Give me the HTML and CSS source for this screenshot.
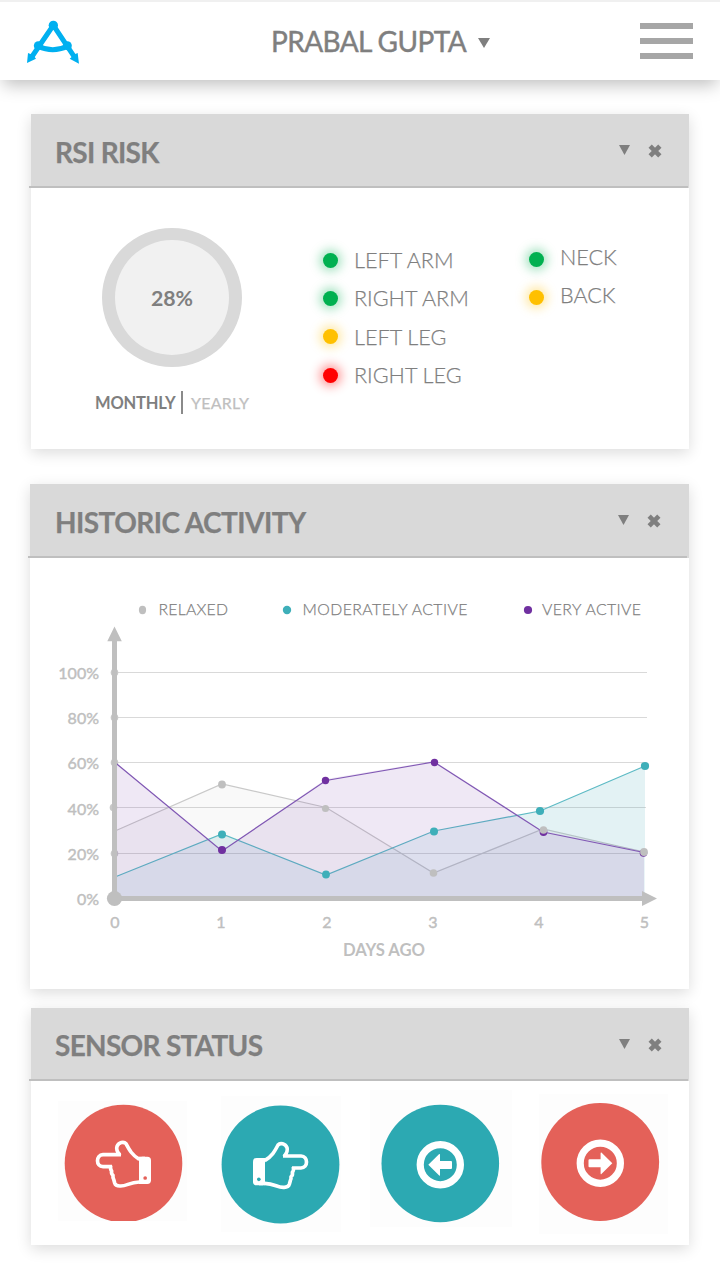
FILE: index.html
```html
<!DOCTYPE html>
<html lang="en">
<head>
<meta charset="utf-8">
<title>RSI Dashboard</title>
<link rel="stylesheet" href="styles.css">
</head>
<body>
<header class="topbar">
  <svg class="logo" viewBox="75 57 168 140">
    <g fill="none" stroke="#00b0f0" stroke-width="15">
      <path d="M93 174 160 76 225 174M115 139Q158 160 202 139"/>
    </g>
    <g fill="#00b0f0">
      <circle cx="160" cy="76" r="14"/><circle cx="115" cy="137" r="13.500"/><circle cx="202" cy="137" r="13.500"/>
      <path d="M81 189 84 159 93 163 104 171 108 176ZM237 191 209 176 215 171 226 162 233 159Z"/>
    </g>
  </svg>
  <div class="user"><span class="user-name">PRABAL GUPTA</span><svg class="user-caret" viewBox="0 0 12 10"><path d="M0 0H12L6 10Z"/></svg></div>
  <div class="menu"><i></i><i></i><i></i></div>
</header>

<main>
  <section class="card risk">
    <div class="card-head">
      <h2 class="t-risk">RSI RISK</h2>
      <svg class="caret" viewBox="0 0 11 10"><path d="M0 0H11L5.500 10Z"/></svg>
      <svg class="close" viewBox="0 0 13 13"><path d="M2 2 11 11M11 2 2 11"/></svg>
    </div>
    <div class="risk-body">
      <div class="gauge">
        <div class="ring">28%</div>
        <div class="period"><b>MONTHLY</b><i></i><span>YEARLY</span></div>
      </div>
      <ul class="parts">
        <li class="green"><span>LEFT ARM</span></li>
        <li class="green"><span>RIGHT ARM</span></li>
        <li class="amber"><span>LEFT LEG</span></li>
        <li class="red"><span>RIGHT LEG</span></li>
      </ul>
      <ul class="parts second">
        <li class="green"><span>NECK</span></li>
        <li class="amber"><span>BACK</span></li>
      </ul>
    </div>
  </section>

  <section class="card history">
    <div class="card-head">
      <h2 class="t-history">HISTORIC ACTIVITY</h2>
      <svg class="caret" viewBox="0 0 11 10"><path d="M0 0H11L5.500 10Z"/></svg>
      <svg class="close" viewBox="0 0 13 13"><path d="M2 2 11 11M11 2 2 11"/></svg>
    </div>
    <svg class="chart" viewBox="30 558 659 431">
      <g class="legend">
        <ellipse cx="142.500" cy="610" rx="3.600" ry="4.200" fill="#bfbfbf"/>
        <circle cx="287" cy="610" r="4.200" fill="#3eafb9"/>
        <circle cx="528" cy="610" r="4.100" fill="#7030a0"/>
        <text x="158.500" y="615" textLength="69.500">RELAXED</text>
        <text x="302.500" y="615" textLength="165">MODERATELY ACTIVE</text>
        <text x="542" y="615" textLength="99">VERY ACTIVE</text>
      </g>
      <path class="grid" d="M115 672.500H647M115 717.500H647M115 762.500H647M115 807.500H646M115 853.500H646"/>
      <g fill="#c8c8c8"><circle cx="114.500" cy="672.500" r="3.800"/><circle cx="114.500" cy="717.500" r="3.800"/><circle cx="114.500" cy="762.500" r="3.800"/><circle cx="113.500" cy="807.500" r="3.800"/><circle cx="114.500" cy="853.500" r="3.800"/></g>
      <path fill="#7f7f7f" fill-opacity=".045" d="M115 831 222 784 326 807.500 433.500 873 543 829 644 852V897H115Z"/>
      <path class="line" stroke="#c9c9c9" d="M115 831 222 784 326 807.500 433.500 873 543 829 644 852"/>
      <path fill="#4caac4" fill-opacity=".115" d="M115 877 222 834 326 875 434 831 540 811 645 766V897H115Z"/>
      <path fill="#3eb98f" fill-opacity=".04" d="M519 815 540 811 645 766V852L543 831ZM206 840 222 834 238 841 222 851Z"/>
      <path class="line" stroke="#5cbac4" d="M115 877 222 834 326 875 434 831 540 811 645 766"/>
      <path fill="#7030a8" fill-opacity=".11" d="M115 762 222 851 326 779 434 761 543 831 644 851V897H115Z"/>
      <path class="line" stroke="#8058b4" d="M115 762.500 222 851 326 780.500 434 762 543 832 644 852.500"/>
      <g fill="#7030a0"><circle cx="222" cy="850" r="4"/><circle cx="325.500" cy="780.500" r="3.700"/><circle cx="434.500" cy="762.500" r="3.700"/><circle cx="543.500" cy="832" r="3.900"/><circle cx="643.500" cy="853" r="3.800"/></g>
      <g fill="#3eafb9"><circle cx="222" cy="834.500" r="4"/><circle cx="326" cy="874.500" r="3.900"/><circle cx="434" cy="831.500" r="4"/><circle cx="540" cy="811" r="4.100"/><circle cx="645" cy="766" r="4.100"/></g>
      <g fill="#bfbfbf"><circle cx="222" cy="784.500" r="3.900"/><circle cx="325.500" cy="808.500" r="3.600"/><circle cx="433.500" cy="873" r="3.800"/><circle cx="543.500" cy="830" r="3.800"/><circle cx="644" cy="852" r="3.900"/>
        <path d="M112 639H117V896H642V891L657 898.500 642 906V901H112ZM107.300 641.300 114.500 626.500 121.800 641.300Z"/>
        <circle cx="114.500" cy="898.500" r="7.600"/>
      </g>
      <g class="ylabels">
        <text x="99" y="679">100%</text><text x="99" y="724">80%</text><text x="99" y="769">60%</text>
        <text x="99" y="815">40%</text><text x="99" y="860">20%</text><text x="99" y="905">0%</text>
      </g>
      <g class="xlabels">
        <text x="115" y="928">0</text><text x="221" y="928">1</text><text x="327" y="928">2</text>
        <text x="433" y="928">3</text><text x="539" y="928">4</text><text x="644.500" y="928">5</text>
      </g>
      <text class="axis-title" x="343" y="956" textLength="82">DAYS AGO</text>
    </svg>
  </section>

  <section class="card sensors">
    <div class="card-head">
      <h2 class="t-sensors">SENSOR STATUS</h2>
      <svg class="caret" viewBox="0 0 11 10"><path d="M0 0H11L5.500 10Z"/></svg>
      <svg class="close" viewBox="0 0 13 13"><path d="M2 2 11 11M11 2 2 11"/></svg>
    </div>
    <div class="sensor-row">
      <svg class="tile tile-a" viewBox="58 1101 129 120">
        <circle cx="123.500" cy="1163.500" r="58.800" fill="#e46159"/>
        <g transform="translate(20 1080) scale(.33333)">
          <path class="hand" d="M303 224H249C227 225 227 260 249 260H276M272 256Q270 268 275 273 273 282 279 286 278 293 281 298L284 309Q287 319 302 318C322 318 327 307 358 306M300 226Q287 210 291 199C296 186 312 184 318 191 328 210 336 225 358 238"/>
          <rect x="357" y="230" width="36" height="82" rx="11" fill="#fff"/><path d="M357 230H375V312H357Z" fill="#fff"/>
          <circle cx="375.500" cy="294" r="5.500" fill="#e46159"/>
        </g>
      </svg>
      <svg class="tile tile-b" viewBox="221 1096 120 136">
        <circle cx="280.500" cy="1164.500" r="58.900" fill="#2ca9b2"/>
        <g transform="translate(384 1081.330) scale(-.33333 .33333)">
          <path class="hand" d="M303 224H249C227 225 227 260 249 260H276M272 256Q270 268 275 273 273 282 279 286 278 293 281 298L284 309Q287 319 302 318C322 318 327 307 358 306M300 226Q287 210 291 199C296 186 312 184 318 191 328 210 336 225 358 238"/>
          <rect x="357" y="230" width="36" height="82" rx="11" fill="#fff"/><path d="M357 230H375V312H357Z" fill="#fff"/>
          <circle cx="375.500" cy="294" r="5.500" fill="#2ca9b2"/>
        </g>
      </svg>
      <svg class="tile tile-c" viewBox="370 1090 142 137">
        <circle cx="440.300" cy="1163.500" r="58.800" fill="#2ca9b2"/>
        <circle cx="440.300" cy="1164.700" r="20.100" fill="none" stroke="#fff" stroke-width="7.200"/>
        <path fill="#fff" d="M428.300 1164.700 439.200 1154Q440 1153.500 440 1155V1161H451Q452 1161 452 1162V1168Q452 1169 451 1169H440V1175Q440 1176.300 439.200 1175.500Z"/>
      </svg>
      <svg class="tile tile-d" viewBox="539 1094 129 140">
        <circle cx="600.200" cy="1162" r="58.900" fill="#e46159"/>
        <circle cx="600.300" cy="1163.200" r="20.100" fill="none" stroke="#fff" stroke-width="7.200"/>
        <path fill="#fff" d="M612.300 1163.200 601.400 1152.500Q600.600 1152 600.600 1153.500V1159.200H589.500Q588.500 1159.200 588.500 1160.200V1166.200Q588.500 1167.200 589.500 1167.200H600.600V1173.300Q600.600 1174.800 601.400 1174Z"/>
      </svg>
    </div>
  </section>
</main>
</body>
</html>
```
FILE: styles.css
```css
* { box-sizing: border-box; }
body {
  margin: 0;
  width: 720px;
  height: 1280px;
  overflow: hidden;
  background: #fff;
  font-family: Lato, sans-serif;
  color: #7f7f7f;
}
svg { display: block; flex: none; }
h2, ul { margin: 0; padding: 0; }

.topbar {
  display: flex;
  align-items: center;
  height: 80px;
  padding: 0 27px 0 25px;
  border-top: 2px solid #f0f0f0;
  background: #fff;
  box-shadow: 0 8px 16px -3px rgba(0, 0, 0, .25);
}
.logo { width: 56px; height: 46.67px; margin-top: 2px; }
.user { display: flex; align-items: center; margin-left: 190px; }
.user-name {
  width: 207px;
  margin-top: -1px;
  font-size: 28px;
  line-height: 34px;
  letter-spacing: -.6px;
  white-space: nowrap;
  -webkit-text-stroke: .45px #7f7f7f;
}
.user-caret { width: 12px; height: 10px; margin-top: 3px; }
.user-caret path, .caret path { fill: #7f7f7f; }
.menu { display: grid; gap: 9px; width: 53px; margin-left: auto; }
.menu i { height: 6px; background: #a6a6a6; }

main { display: flex; flex-direction: column; padding: 34px 31px 0; }
.card {
  display: flex;
  flex-direction: column;
  flex: none;
  background: #fff;
  box-shadow: 0 4px 14px rgba(0, 0, 0, .14);
}
.risk { height: 335px; }
.history { height: 505px; margin: 35px 0 0 -1px; }
.sensors { height: 237px; margin-top: 19px; }
.card-head {
  display: flex;
  align-items: center;
  flex: none;
  height: 74px;
  margin: 0 1px 0 -2px;
  padding: 0 26px;
  border-bottom: 2px solid #bfbfbf;
  background: linear-gradient(#d9d9d9, #d9d9d9) 2px 0 no-repeat;
  box-shadow: 1px 0 #d9d9d9;
}
.history .card-head { margin-right: 2px; padding-left: 27px; box-shadow: 2px 0 #d9d9d9; }
.sensors .card-head { height: 73px; }
h2 {
  margin-top: 3px;
  font-size: 28px;
  line-height: 34px;
  letter-spacing: -.7px;
  white-space: nowrap;
  -webkit-text-stroke: .25px #7f7f7f;
}
.t-history { letter-spacing: -.55px; }
.t-sensors { margin-top: 2px; }
.caret { width: 11px; height: 10px; margin-left: auto; }
.close { width: 14px; height: 14px; margin: 2px 0 0 18px; fill: none; stroke: #7f7f7f; stroke-width: 4.300; }

.risk-body { display: flex; align-items: flex-start; }
.gauge { flex: none; width: 282px; padding: 40px 0 0 64px; }
.ring {
  display: grid;
  place-items: center;
  width: 140px;
  height: 139px;
  margin-left: 7px;
  border: solid #d9d9d9;
  border-width: 12px 13px;
  border-radius: 50%;
  background: #f1f1f1;
  font-size: 21.300px;
  font-weight: 700;
}
.period { display: flex; align-items: center; height: 24px; margin-top: 23px; font-size: 16.500px; white-space: nowrap; }
.period b { width: 86px; margin-top: 2px; letter-spacing: -.2px; }
.period i { width: 2px; height: 23px; background: #8a8a8a; }
.period span { margin: 1px 0 0 8px; font-size: 16px; letter-spacing: .25px; color: #bfbfbf; -webkit-text-stroke: .25px #bfbfbf; }
.parts { flex: none; width: 206px; padding: 53px 0 0 10px; list-style: none; }
.parts.second { width: 140px; padding-top: 52px; }
.parts li {
  display: flex;
  align-items: center;
  height: 38.330px;
  font-size: 21.600px;
  font-weight: 300;
  white-space: nowrap;
  -webkit-text-stroke: .25px #7f7f7f;
}
.parts li::before {
  content: "";
  width: 15px;
  height: 15px;
  margin-right: 16px;
  border-radius: 50%;
}
.second li span { margin: -4px 0 0; }
.green::before { background: #00b050; box-shadow: 0 0 11px 3px rgba(0, 176, 80, .4); }
.amber::before { background: #ffc000; box-shadow: 0 0 11px 3px rgba(255, 192, 0, .4); }
.red::before { background: #f00; box-shadow: 0 0 11px 3px rgba(255, 0, 0, .45); }

.chart { width: 659px; height: 431px; }
.legend { font-size: 15.800px; font-weight: 300; fill: #7f7f7f; }
.legend text { stroke: #7f7f7f; stroke-width: .25; }
.grid { fill: none; stroke: #d9d9d9; }
.line { fill: none; stroke-width: 1.200; }
.ylabels, .xlabels { font-size: 16px; fill: #bfbfbf; stroke: #bfbfbf; stroke-width: .45; }
.ylabels { text-anchor: end; }
.xlabels { text-anchor: middle; }
.axis-title { font-size: 16.700px; font-weight: 700; fill: #bfbfbf; }

.sensor-row { display: flex; align-items: flex-start; padding-left: 27px; }
.tile { background: #fdfdfd; }
.tile-a { width: 129px; height: 120px; margin-top: 20px; }
.tile-b { width: 120px; height: 136px; margin: 15px 0 0 34px; }
.tile-c { width: 142px; height: 137px; margin: 9px 0 0 29px; }
.tile-d { width: 129px; height: 140px; margin: 13px 0 0 27px; }
.hand { fill: none; stroke: #fff; stroke-width: 11; stroke-linejoin: round; }
```
